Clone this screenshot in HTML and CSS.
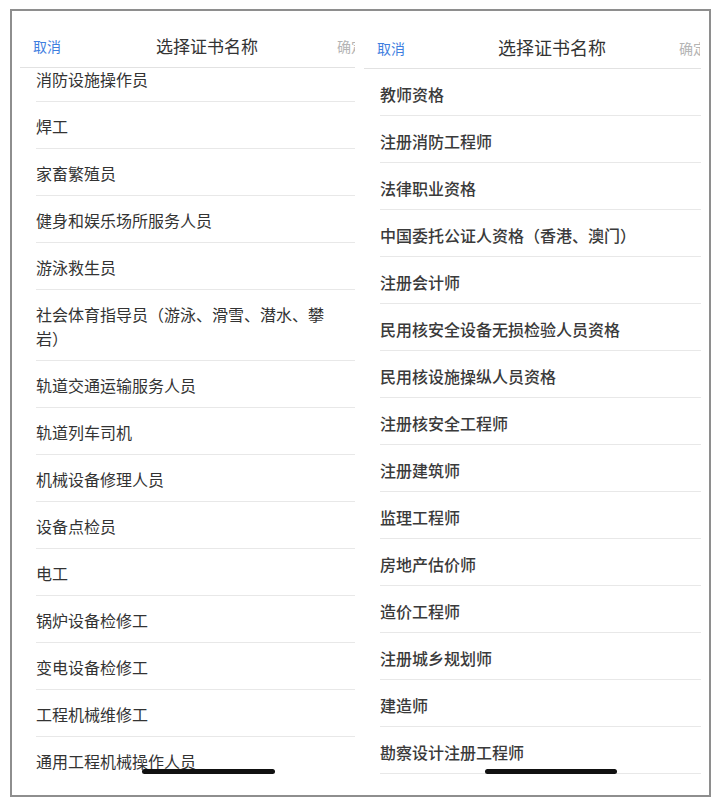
FILE: index.html
```html
<!DOCTYPE html>
<html lang="zh-CN">
<head>
    <meta charset="UTF-8">
    <meta name="viewport" content="width=device-width, initial-scale=1.0">
    <title>选择证书名称</title>
    <link rel="stylesheet" href="styles.css">
</head>
<body>

    <div class="frame">
        <section class="panel panel-left">
            <header class="bar">
                <div class="bar-inner">
                    <span class="bar-side"><span class="cancel">取消</span></span>
                    <h1 class="bar-title">选择证书名称</h1>
                    <span class="bar-side"><span class="confirm">确定</span></span>
                </div>
            </header>
            <div class="bar-line"></div>
            <div class="list">
                <ul class="items">
                    <li>消防设施操作员</li>
                    <li>焊工</li>
                    <li>家畜繁殖员</li>
                    <li>健身和娱乐场所服务人员</li>
                    <li>游泳救生员</li>
                    <li>社会体育指导员（游泳、滑雪、潜水、攀岩）</li>
                    <li>轨道交通运输服务人员</li>
                    <li>轨道列车司机</li>
                    <li>机械设备修理人员</li>
                    <li>设备点检员</li>
                    <li>电工</li>
                    <li>锅炉设备检修工</li>
                    <li>变电设备检修工</li>
                    <li>工程机械维修工</li>
                    <li>通用工程机械操作人员</li>
                </ul>
            </div>
            <div class="home-bar"></div>
        </section>

        <section class="panel panel-right">
            <header class="bar">
                <div class="bar-inner">
                    <span class="bar-side"><span class="cancel">取消</span></span>
                    <h1 class="bar-title">选择证书名称</h1>
                    <span class="bar-side"><span class="confirm">确定</span></span>
                </div>
            </header>
            <div class="bar-line"></div>
            <div class="list">
                <ul class="items">
                    <li>教师资格</li>
                    <li>注册消防工程师</li>
                    <li>法律职业资格</li>
                    <li>中国委托公证人资格（香港、澳门）</li>
                    <li>注册会计师</li>
                    <li>民用核安全设备无损检验人员资格</li>
                    <li>民用核设施操纵人员资格</li>
                    <li>注册核安全工程师</li>
                    <li>注册建筑师</li>
                    <li>监理工程师</li>
                    <li>房地产估价师</li>
                    <li>造价工程师</li>
                    <li>注册城乡规划师</li>
                    <li>建造师</li>
                    <li>勘察设计注册工程师</li>
                </ul>
            </div>
            <div class="home-bar"></div>
        </section>
    </div>

</body>
</html>
```

FILE: styles.css
```css
body, html {
    margin: 0;
    padding: 0;
    background: #fff;
    font-family: "Noto Sans CJK SC", "Noto Sans", sans-serif;
    color: #333;
}

.frame {
    display: flex;
    gap: 4px;
    width: 697px;
    height: 784px;
    margin: 9px 0 0 10px;
    border: 2px solid #8e8e8e;
    overflow: hidden;
}

.panel {
    position: relative;
    display: flex;
    flex-direction: column;
    overflow: hidden;
    background: #fff;
}

.panel-left {
    width: 346px;
}

.panel-right {
    width: 347px;
}

/* top bar, cut off on the right like the screenshots */
.bar {
    flex: none;
    overflow: hidden;
}

.bar-inner {
    display: flex;
    align-items: center;
    box-sizing: border-box;
    height: 100%;
}

.bar-side {
    flex: none;
    width: 100px;
    white-space: nowrap;
}

.bar-title {
    flex: 1;
    margin: 0;
    text-align: center;
    font-weight: 400;
    color: #333;
    white-space: nowrap;
}

.cancel {
    font-size: 14px;
    color: #3f7fdf;
}

.confirm {
    font-size: 14px;
    color: #b4b4b4;
}

.bar-line {
    flex: none;
    height: 1px;
    background: #e2e2e2;
}

.panel-left .bar {
    height: 56px;
    margin-right: 3px;
}

.panel-left .bar-inner {
    width: 390px;
    padding-top: 12px;
}

.panel-left .bar-title {
    font-size: 17px;
}

.panel-left .cancel {
    padding-left: 21px;
}

.panel-left .confirm {
    padding-left: 35px;
}

.panel-left .bar-line {
    margin: 0 3px 0 8px;
}

.panel-right .bar {
    height: 57px;
    margin-right: 9px;
}

.panel-right .bar-inner {
    width: 380px;
    padding-top: 15px;
}

.panel-right .bar-title {
    font-size: 18px;
}

.panel-right .cancel {
    padding-left: 15px;
}

.panel-right .confirm {
    padding-left: 37px;
}

.panel-right .bar-line {
    margin: 0 8px 0 2px;
}

/* list */
.list {
    flex: 1;
    overflow: hidden;
}

.items {
    list-style: none;
    margin: 0;
    padding: 0;
}

.items li {
    font-size: 16px;
    line-height: 24px;
    border-bottom: 1px solid #e8e8e8;
}

.panel-left .items {
    margin-top: -13px;
}

.panel-left .items li {
    margin: 0 3px 0 24px;
    padding: 12px 14px 10px 0;
}

.panel-left .items li:last-child {
    border-bottom: none;
}

.panel-right .items li {
    margin: 0 8px 0 18px;
    padding: 13px 0 9px;
    font-weight: 500;
    color: #3a3a3a;
}

.home-bar {
    position: absolute;
    bottom: 21px;
    height: 5px;
    border-radius: 3px;
    background: #111;
}

.panel-left .home-bar {
    left: 130px;
    width: 133px;
}

.panel-right .home-bar {
    left: 123px;
    width: 132px;
}
```
